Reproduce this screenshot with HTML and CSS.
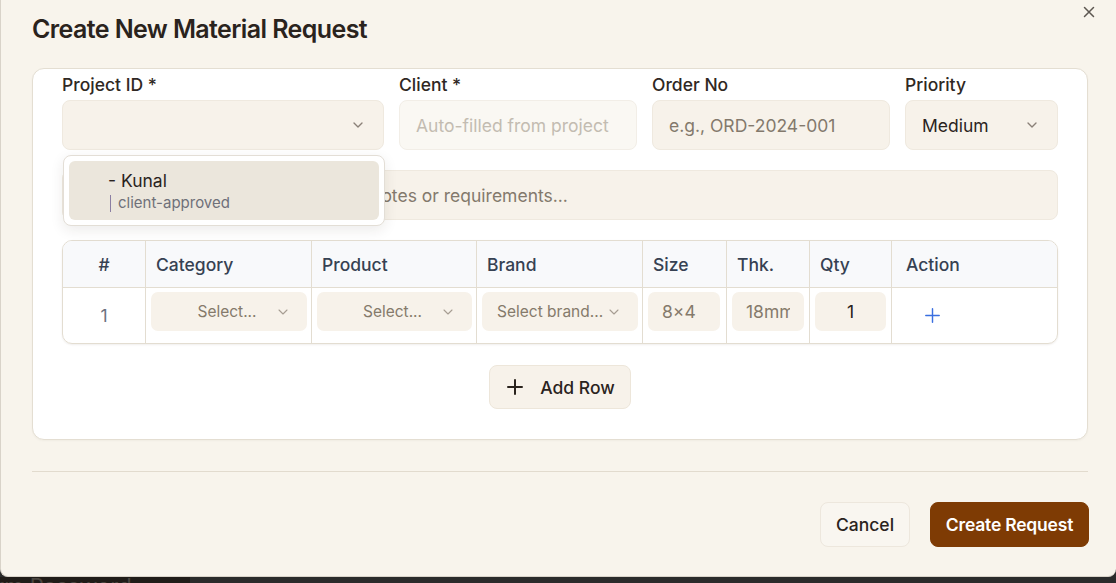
FILE: index.html
```html
<!DOCTYPE html>
<html lang="en">
<head>
<meta charset="utf-8">
<title>Create New Material Request</title>
<link rel="stylesheet" href="styles.css">
</head>
<body>
<div class="modal">
  <button class="close" aria-label="Close">
    <svg width="18" height="18" viewBox="0 0 24 24" fill="none" stroke="currentColor" stroke-width="2" stroke-linecap="round"><path d="M18 6 6 18M6 6l12 12"/></svg>
  </button>
  <h1 class="title">Create New Material Request</h1>

  <div class="card">
    <div class="fields">
      <div class="field">
        <label class="label">Project ID *</label>
        <div class="input select-input">
          <span></span>
          <svg class="chev" width="16" height="16" viewBox="0 0 24 24" fill="none" stroke="currentColor" stroke-width="2" stroke-linecap="round" stroke-linejoin="round"><path d="m6 9 6 6 6-6"/></svg>
        </div>
        <div class="dropdown">
          <div class="option">
            <div class="opt-name">- Kunal</div>
            <div class="opt-meta"><span class="bar"></span>client-approved</div>
          </div>
        </div>
      </div>
      <div class="field">
        <label class="label">Client *</label>
        <div class="input disabled"><span class="ph-light">Auto-filled from project</span></div>
      </div>
      <div class="field">
        <label class="label">Order No</label>
        <div class="input"><span class="ph">e.g., ORD-2024-001</span></div>
      </div>
      <div class="field">
        <label class="label">Priority</label>
        <div class="input select-input">
          <span class="val">Medium</span>
          <svg class="chev" width="16" height="16" viewBox="0 0 24 24" fill="none" stroke="currentColor" stroke-width="2" stroke-linecap="round" stroke-linejoin="round"><path d="m6 9 6 6 6-6"/></svg>
        </div>
      </div>
    </div>

    <div class="input notes"><span class="ph">Any special instructions, additional notes or requirements...</span></div>

    <div class="tbl">
      <div class="th center">#</div>
      <div class="th">Category</div>
      <div class="th">Product</div>
      <div class="th">Brand</div>
      <div class="th">Size</div>
      <div class="th">Thk.</div>
      <div class="th">Qty</div>
      <div class="th th-action">Action</div>

      <div class="td num">1</div>
      <div class="td"><div class="sel"><span class="sel-text">Select...</span><svg class="chev-s" width="16" height="16" viewBox="0 0 24 24" fill="none" stroke="currentColor" stroke-width="1.6" stroke-linecap="round" stroke-linejoin="round"><path d="m6 9 6 6 6-6"/></svg></div></div>
      <div class="td"><div class="sel"><span class="sel-text">Select...</span><svg class="chev-s" width="16" height="16" viewBox="0 0 24 24" fill="none" stroke="currentColor" stroke-width="1.6" stroke-linecap="round" stroke-linejoin="round"><path d="m6 9 6 6 6-6"/></svg></div></div>
      <div class="td"><div class="sel sel-left"><span class="sel-text">Select brand...</span><svg class="chev-s" width="16" height="16" viewBox="0 0 24 24" fill="none" stroke="currentColor" stroke-width="1.6" stroke-linecap="round" stroke-linejoin="round"><path d="m6 9 6 6 6-6"/></svg></div></div>
      <div class="td"><div class="cell-input"><span class="ci-text">8×4</span></div></div>
      <div class="td"><div class="cell-input"><span class="ci-text">18mm</span></div></div>
      <div class="td"><div class="cell-input qty"><span class="ci-text">1</span></div></div>
      <div class="td action">
        <svg class="add-icon" width="23" height="23" viewBox="0 0 24 24" fill="none" stroke="currentColor" stroke-width="1.5" stroke-linecap="round"><path d="M5 12h14M12 5v14"/></svg>
      </div>
    </div>

    <div class="add-wrap">
      <button class="add-row">
        <svg width="24" height="24" viewBox="0 0 24 24" fill="none" stroke="currentColor" stroke-width="2" stroke-linecap="round"><path d="M5 12h14M12 5v14"/></svg>
        <span>Add Row</span>
      </button>
    </div>
  </div>

  <div class="divider"></div>

  <div class="footer">
    <button class="btn btn-cancel">Cancel</button>
    <button class="btn btn-primary">Create Request</button>
  </div>
</div>
<div class="under">
  <div class="under-left"><span>Confirm Password</span></div>
</div>
</body>
</html>
```

FILE: styles.css
```css
* { box-sizing: border-box; }

html, body {
  margin: 0;
  padding: 0;
  height: 583px;
  overflow: hidden;
}

body {
  background: #2b2b2b;
  font-family: Inter, "Noto Sans", sans-serif;
  color: #2a231d;
}

button {
  font-family: inherit;
  cursor: pointer;
}

.modal {
  position: relative;
  height: 577px;
  background: #f8f4ec;
  border-left: 1px solid #d9d3c9;
  border-bottom: 1px solid #d9d3c9;
  border-radius: 0 0 8px 8px;
  padding: 13px 28px 0 31px;
}

.close {
  position: absolute;
  top: 3px;
  right: 18px;
  width: 18px;
  height: 18px;
  padding: 0;
  border: 0;
  background: none;
  color: #5d5751;
  display: flex;
}

.title {
  margin: 0;
  font-size: 25px;
  line-height: 32px;
  font-weight: 600;
  letter-spacing: -0.6px;
  color: #2a231d;
}

.card {
  margin-top: 23px;
  background: #ffffff;
  border: 1px solid #e4ded2;
  border-radius: 12px;
  padding: 5px 29px 30px 29px;
  box-shadow: 0 1px 2px rgba(60, 40, 20, 0.04);
}

.fields {
  display: grid;
  grid-template-columns: 322px 238px 238px 153px;
  column-gap: 15px;
}

.field {
  position: relative;
  display: flex;
  flex-direction: column;
}

.label {
  font-size: 17.5px;
  line-height: 22px;
  font-weight: 450;
  color: #2f2823;
  margin-bottom: 4px;
}

.input {
  height: 50px;
  background: #f7f2ea;
  border: 1px solid #efe9df;
  border-radius: 8px;
  display: flex;
  align-items: center;
  padding: 0 16px;
  font-size: 17.5px;
}

.select-input {
  justify-content: space-between;
  padding-right: 17px;
}

.chev {
  color: #8a8178;
}

.val {
  color: #2a231d;
}

.ph {
  color: #83796c;
  white-space: nowrap;
}

.ph-light {
  color: #c3bcb1;
  white-space: nowrap;
}

.disabled {
  background: #faf8f3;
  border-color: #f2eee7;
}

.dropdown {
  position: absolute;
  top: 81px;
  left: 1px;
  width: 322px;
  background: #ffffff;
  border: 1px solid #e3ded6;
  border-radius: 8px;
  padding: 5px;
  box-shadow: 0 4px 14px rgba(40, 30, 20, 0.09);
  z-index: 5;
}

.option {
  background: #ebe6dc;
  border-radius: 6px;
  height: 59px;
  padding: 9px 39px 0;
}

.opt-name {
  font-size: 17.5px;
  line-height: 22px;
  color: #2a231d;
}

.opt-meta {
  display: flex;
  align-items: center;
  font-size: 15px;
  line-height: 22px;
  color: #6f7079;
}

.bar {
  display: inline-block;
  width: 1px;
  height: 17px;
  background: #8b7fa3;
  margin: 0 7px 0 2px;
}

.notes {
  margin-top: 20px;
  overflow: hidden;
}

.tbl {
  margin-top: 20px;
  display: grid;
  grid-template-columns: 82px 166px 165px 166px 84px 83px 82px 1fr;
  border: 1px solid #e3ddd1;
  border-radius: 10px;
  overflow: hidden;
  box-shadow: 0 1px 2px rgba(60, 40, 20, 0.08);
}

.th {
  height: 47px;
  background: #f8f9fb;
  border-bottom: 1px solid #e3ddd1;
  border-left: 1px solid #e3ddd1;
  display: flex;
  align-items: center;
  padding: 0 10px;
  font-size: 17.5px;
  font-weight: 450;
  color: #364152;
}

.th:first-child {
  border-left: 0;
}

.th.center {
  justify-content: center;
}

.th-action {
  padding-left: 14px;
}

.td {
  height: 55px;
  border-left: 1px solid #e3ddd1;
  padding: 4px 4px 0 5px;
}

.td.num {
  border-left: 0;
  display: flex;
  align-items: center;
  justify-content: center;
  padding: 0;
  font-size: 17.5px;
  color: #6b7280;
}

.sel {
  position: relative;
  height: 39px;
  background: #f7f2ea;
  border-radius: 7px;
  display: flex;
  align-items: center;
  padding: 0 38px 0 34px;
  font-size: 15.5px;
  color: #857a6b;
}

.sel-text {
  flex: 1;
  text-align: center;
  white-space: nowrap;
  overflow: hidden;
}

.sel-left {
  padding-left: 15px;
  padding-right: 30px;
}

.sel-left .sel-text {
  text-align: left;
  overflow: visible;
}

.chev-s {
  position: absolute;
  right: 16px;
  top: 12px;
  color: #a69d92;
}

.cell-input {
  height: 39px;
  width: 72px;
  background: #f7f2ea;
  border-radius: 7px;
  display: flex;
  align-items: center;
  padding: 0 14px;
  font-size: 17.5px;
  color: #857a6b;
}

.ci-text {
  flex: 1;
  min-width: 0;
  white-space: nowrap;
  overflow: hidden;
}

.cell-input.qty {
  width: 71px;
}

.cell-input.qty .ci-text {
  text-align: center;
  color: #2a231d;
}

.td.action {
  display: flex;
  align-items: center;
  padding: 0 0 0 29px;
  color: #3a6fe0;
}

.add-wrap {
  margin-top: 21px;
  display: flex;
  justify-content: center;
}

.add-row {
  height: 44px;
  display: flex;
  align-items: center;
  gap: 13px;
  padding: 0 15px 0 13px;
  background: #f7f2ea;
  border: 1px solid #ede6da;
  border-radius: 8px;
  font-size: 17.5px;
  font-weight: 450;
  color: #2a231d;
}

.divider {
  margin-top: 31px;
  height: 1px;
  background: #e2dbce;
}

.footer {
  margin-top: 30px;
  display: flex;
  justify-content: flex-end;
  gap: 20px;
  margin-right: -1px;
}

.btn {
  height: 45px;
  border-radius: 8px;
  font-size: 17.5px;
  font-weight: 450;
  padding: 0;
  white-space: nowrap;
}

.btn-cancel {
  width: 90px;
  background: #f9f6f0;
  border: 1px solid #ede7dd;
  color: #2a231d;
}

.btn-primary {
  width: 159px;
  background: #7e3b04;
  border: 1px solid #7e3b04;
  color: #ffffff;
  font-weight: 600;
  letter-spacing: -0.2px;
}

.under {
  height: 6px;
  display: flex;
  overflow: hidden;
}

.under-left {
  width: 190px;
  background: #201c18;
  overflow: hidden;
}

.under-left span {
  display: block;
  margin-left: -60px;
  margin-top: -2px;
  font-size: 22px;
  line-height: 22px;
  color: #4a4540;
  white-space: nowrap;
}
```
